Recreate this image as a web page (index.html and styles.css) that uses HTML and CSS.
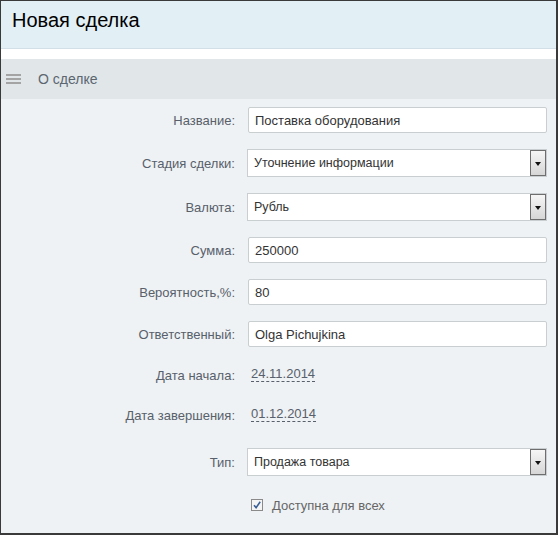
FILE: index.html
```html
<!DOCTYPE html>
<html>
<head>
<meta charset="utf-8">
<link rel="stylesheet" href="styles.css">
</head>
<body>
<div class="window">
  <div class="header"><h1 class="title">Новая сделка</h1></div>
  <div class="spacer"></div>
  <div class="section">
    <span class="burger"><i></i><i></i><i></i></span>
    <span class="section-title">О сделке</span>
  </div>
  <div class="form">
    <div class="row"><label class="label">Название:</label><div class="input">Поставка оборудования</div></div>
    <div class="row"><label class="label">Стадия сделки:</label><div class="select"><span class="sel-text">Уточнение информации</span><span class="arrow"></span></div></div>
    <div class="row"><label class="label">Валюта:</label><div class="select"><span class="sel-text">Рубль</span><span class="arrow"></span></div></div>
    <div class="row"><label class="label">Сумма:</label><div class="input">250000</div></div>
    <div class="row"><label class="label">Вероятность,%:</label><div class="input">80</div></div>
    <div class="row"><label class="label">Ответственный:</label><div class="input">Olga Pichujkina</div></div>
    <div class="row date-row"><label class="label">Дата начала:</label><span class="date">24.11.2014</span></div>
    <div class="row date-row"><label class="label">Дата завершения:</label><span class="date">01.12.2014</span></div>
    <div class="row type-row"><label class="label">Тип:</label><div class="select"><span class="sel-text">Продажа товара</span><span class="arrow"></span></div></div>
    <div class="row"><span class="label"></span><span class="check-wrap"><span class="checkbox"><svg width="10" height="10" viewBox="0 0 10 10"><path d="M2 5.2 L4.1 7.6 L8.2 1.8" fill="none" stroke="#3a5f96" stroke-width="1.6"/></svg></span><span class="check-label">Доступна для всех</span></span></div>
  </div>
</div>
</body>
</html>
```
FILE: styles.css
```css
html, body { margin: 0; padding: 0; }
body { font-family: Arial, "Liberation Sans", sans-serif; }
.window {
  width: 558px; height: 535px; box-sizing: border-box;
  border-top: 1px solid #3a3a3a; border-left: 1px solid #3a3a3a;
  border-right: 2px solid #3a3a3a; border-bottom: 2px solid #3a3a3a;
  background: #eef2f4;
  display: flex; flex-direction: column;
}
.header {
  height: 47px; background: #e2eff5; border-bottom: 1px solid #d3dfe7;
  display: flex; align-items: center; padding-left: 11px;
}
.title { margin: 0; font-size: 20px; font-weight: normal; color: #000; line-height: 1; position: relative; top: -5px; }
.spacer { height: 10px; background: #fff; }
.section {
  height: 40px; background: #e1e6e9; display: flex; align-items: center;
}
.burger { width: 15px; margin-left: 5px; display: flex; flex-direction: column; gap: 2px; }
.burger i { display: block; height: 2px; background: #a4a4a4; }
.section-title { margin-left: 17px; font-size: 14px; color: #5b6670; }
.form { padding-top: 8px; display: flex; flex-direction: column; gap: 16px; }
.row { display: flex; align-items: center; min-height: 26px; }
.label { width: 234px; text-align: right; font-size: 13px; color: #58606b; flex: none; margin-right: 12px; }
.input {
  width: 299px; height: 26px; box-sizing: border-box; background: #fff;
  border: 1px solid #c9ced1; border-radius: 2px; padding-left: 6px;
  font-size: 13px; color: #333; display: flex; align-items: center; margin-left: 1px;
}
.select {
  width: 300px; height: 28px; box-sizing: border-box; background: #fff;
  border: 1px solid #c9ced1; display: flex; align-items: center; justify-content: space-between;
}
.sel-text { padding-left: 6px; font-size: 12.5px; color: #333; }
.arrow {
  width: 16px; height: 26px; box-sizing: border-box;
  border: 1px solid #6e6e6e; background: linear-gradient(#f6f6f6, #d6d6d6);
  position: relative;
}
.arrow::after {
  content: ""; position: absolute; left: 3.5px; top: 11px;
  border-left: 3.5px solid transparent; border-right: 3.5px solid transparent; border-top: 4px solid #111;
}
.date-row { min-height: 24px; }
.type-row { margin-top: 5px; }
.date { font-size: 13px; color: #58606b; margin-left: 4px; border-bottom: 1px dashed #58606b; line-height: 15px; position: relative; top: -1px; }
.check-wrap { display: flex; align-items: center; margin-left: 4px; }
.checkbox {
  width: 12px; height: 12px; box-sizing: border-box; border: 1px solid #8a8a8a;
  background: #f4f4f4; display: flex; align-items: center; justify-content: center;
}
.check-label { margin-left: 9px; font-size: 13px; color: #666; }
```
